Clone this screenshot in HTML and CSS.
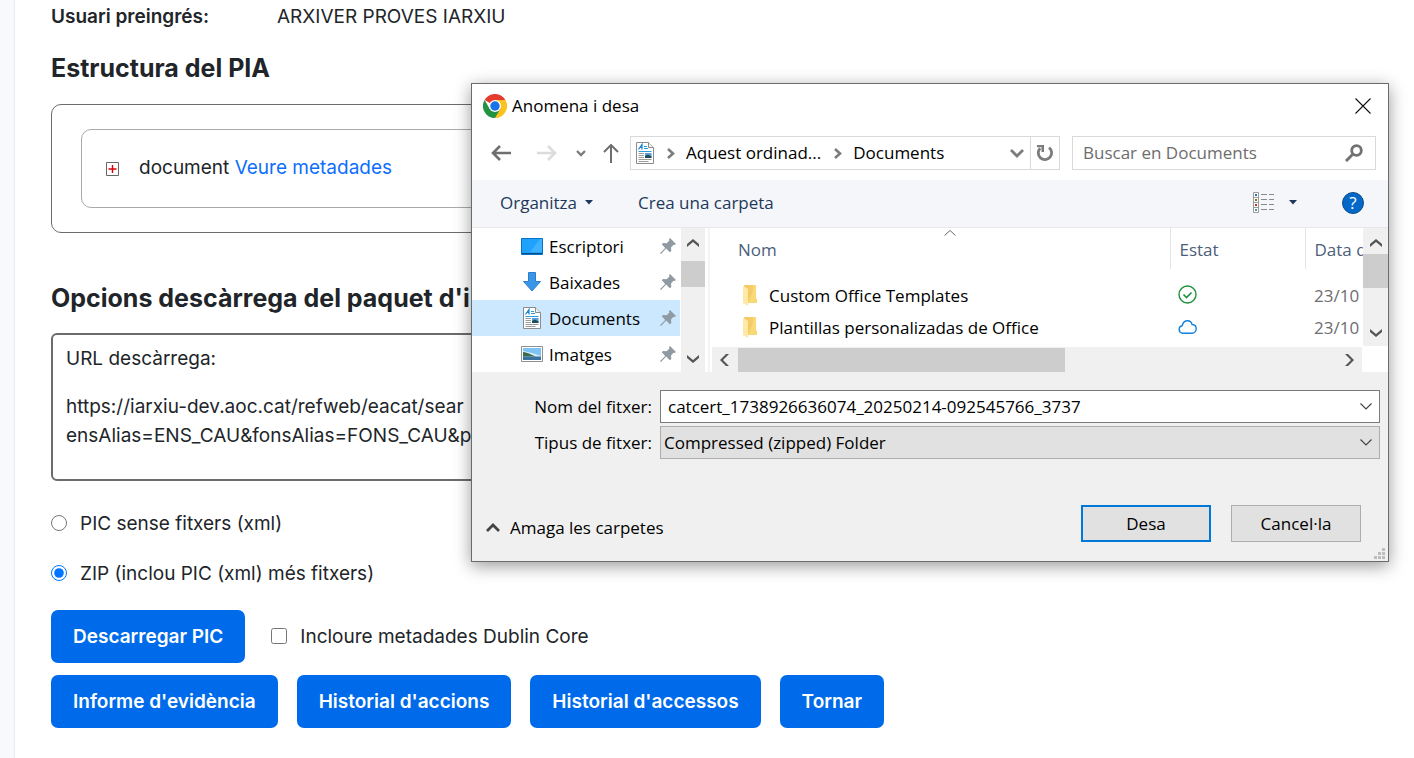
FILE: index.html
```html
<!DOCTYPE html>
<html lang="ca">
<head>
<meta charset="utf-8">
<title>iArxiu</title>
<meta name="viewport" content="width=device-width, initial-scale=1">
<link rel="stylesheet" href="styles.css">
</head>
<body>
<svg class="defs" aria-hidden="true">
  <symbol id="doc" viewBox="0 0 18 22">
    <path d="M.5.5h12l5 5v16H.5z" fill="#fff" stroke="#8b8b8b"/>
    <path d="M12.5.5v5h5" fill="#eee" stroke="#8b8b8b"/>
    <path d="M2.500 7.500L6 2.500v5M4 5.500h2" fill="none" stroke="#1583cf" stroke-width="1.200"/>
    <path d="M8 4.500h3M8 6.500h4M2.500 9.500h13" stroke="#2a9be0"/>
    <path d="M2.500 11.500H8M2.500 13.500H8M2.500 15.500H8M2.500 17.500h13M2.500 19.500h10" stroke="#9a9a9a"/>
    <path d="M9 11h6.500v5H9z" fill="#5a9fd8"/><path d="M9 14l3-1.500 3.500 2V16H9z" fill="#1d4d5a"/>
  </symbol>
  <symbol id="pin" viewBox="0 0 16 16">
    <path d="M10 0l6 6-1.500 1-1-.3-2.500 2.700.3 3.600-1.500 1.200-3.600-3.700L1 16l-1-.8 5.200-5.300L1.800 6.200 3 5l3.700.2L9.400 2.600 9 1z" fill="#8f9aa3"/>
  </symbol>
  <symbol id="folder" viewBox="0 0 14 22">
    <path d="M1 0h12v13l1 1v4H4z" fill="#f9d978"/><path d="M1 0h9v6L5 18z" fill="#f3cc69"/>
    <path d="M0 1l5 3v17l-5-3z" fill="#ffe9a6"/>
  </symbol>
  <symbol id="down" viewBox="0 0 12 8"><path d="M0 0l6 5 6-5v3L6 8 0 3z"/></symbol>
  <symbol id="up" viewBox="0 0 12 8"><path d="M0 8l6-5 6 5V5L6 0 0 5z"/></symbol>
  <symbol id="thin-down" viewBox="0 0 12 7"><path d="M.5.5L6 6l5.500-5.500" fill="none" stroke="#444" stroke-width="1.200"/></symbol>
  <symbol id="crumb" viewBox="0 0 8 11"><path d="M1 1l5 4.500L1 10" fill="none" stroke="#7c7c7c" stroke-width="2.600"/></symbol>
  <symbol id="caret" viewBox="0 0 8 5"><path d="M0 0h8L4 4.500z"/></symbol>
</svg>

<div class="page">
  <div class="rail"></div>
  <main class="main">
    <dl class="field"><dt>Usuari preingrés:</dt><dd>ARXIVER PROVES IARXIU</dd></dl>
    <h2 class="title">Estructura del PIA</h2>
    <div class="tree">
      <div class="node">
        <button class="expand" aria-label="Desplega">
          <svg width="13" height="14" viewBox="0 0 13 14"><path d="M.5.500h12v13H.5z" fill="#fff" stroke="#666"/><path d="M6.500 3v8M2.500 7h8" stroke="#d00" stroke-width="1.400"/></svg>
        </button>
        <span>document <a href="#metadades">Veure metadades</a></span>
      </div>
    </div>
    <h2 class="title title-options">Opcions descàrrega del paquet d'i</h2>
    <div class="url-box">
      <p>URL descàrrega:</p>
      <p>https://iarxiu-dev.aoc.cat/refweb/eacat/sear<br>ensAlias=ENS_CAU&amp;fonsAlias=FONS_CAU&amp;p</p>
    </div>
    <label class="choice"><input type="radio" name="format">PIC sense fitxers (xml)</label>
    <label class="choice"><input type="radio" name="format" checked>ZIP (inclou PIC (xml) més fitxers)</label>
    <div class="actions">
      <button class="btn">Descarregar PIC</button>
      <label class="choice choice-check"><input type="checkbox">Incloure metadades Dublin Core</label>
    </div>
    <div class="actions">
      <button class="btn">Informe d'evidència</button>
      <button class="btn">Historial d'accions</button>
      <button class="btn">Historial d'accessos</button>
      <button class="btn">Tornar</button>
    </div>
  </main>
</div>

<section class="dialog" role="dialog" aria-labelledby="dialog-title">
  <header class="titlebar">
    <svg width="24" height="24" viewBox="0 0 24 24">
      <path d="M12 12L1.600 6A12 12 0 0 1 22.400 6z" fill="#e33b2e"/>
      <path d="M12 12V6h10.400A12 12 0 0 1 12 24z" fill="#fcc31e"/>
      <path d="M12 12l5.200 3L12 24A12 12 0 0 1 1.600 6l5.200 9z" fill="#229342"/>
      <circle cx="12" cy="12" r="6" fill="#fff"/><circle cx="12" cy="12" r="4.700" fill="#1a73e8"/>
    </svg>
    <h1 id="dialog-title">Anomena i desa</h1>
    <button class="plain close" aria-label="Tanca"><svg width="16" height="16" viewBox="0 0 16 16"><path d="M.5.500l15 15M15.500.5l-15 15" stroke="#111" stroke-width="1.100"/></svg></button>
  </header>

  <div class="navbar">
    <div class="nav-buttons">
      <button class="plain" aria-label="Enrere"><svg width="20" height="16" viewBox="0 0 20 16"><path d="M9 1L2 8l7 7M2 8h18" fill="none" stroke="#6f6f6f" stroke-width="2.600"/></svg></button>
      <button class="plain forward" aria-label="Endavant"><svg width="20" height="16" viewBox="0 0 20 16"><path d="M11 1l7 7-7 7M18 8H0" fill="none" stroke="#dcdcdc" stroke-width="2.600"/></svg></button>
      <button class="plain recent" aria-label="Recents"><svg width="10" height="7" viewBox="0 0 10 7"><path d="M1 1l4 4 4-4" fill="none" stroke="#7c7c7c" stroke-width="2.400"/></svg></button>
      <button class="plain" aria-label="Amunt"><svg width="16" height="19" viewBox="0 0 16 19"><path d="M1 8l7-7 7 7M8 1v18" fill="none" stroke="#6f6f6f" stroke-width="2"/></svg></button>
    </div>
    <div class="address">
      <svg width="18" height="22"><use href="#doc"/></svg>
      <svg class="sep" width="8" height="11"><use href="#crumb"/></svg>
      <button class="plain crumb">Aquest ordinad...</button>
      <svg class="sep" width="8" height="11"><use href="#crumb"/></svg>
      <button class="plain crumb">Documents</button>
      <button class="plain history" aria-label="Ubicacions anteriors"><svg width="14" height="9" viewBox="0 0 14 9"><path d="M1 1l6 6 6-6" fill="none" stroke="#7c7c7c" stroke-width="2.800"/></svg></button>
      <button class="plain refresh" aria-label="Actualitza"><svg width="18" height="18" viewBox="0 0 18 18"><path d="M13 3.600A6.700 6.700 0 1 1 4.200 4.200" fill="none" stroke="#7c7c7c" stroke-width="2.800"/><path d="M1 1h7v7H5.500V3.200H1z" fill="#7c7c7c"/></svg></button>
    </div>
    <div class="search">
      <input type="search" placeholder="Buscar en Documents" aria-label="Buscar en Documents">
      <svg width="18" height="18" viewBox="0 0 18 18"><circle cx="11.500" cy="6.500" r="4.800" fill="none" stroke="#727272" stroke-width="2.800"/><path d="M8 10l-7 7" stroke="#727272" stroke-width="3"/></svg>
    </div>
  </div>

  <div class="toolbar">
    <button class="plain">Organitza <svg width="8" height="5"><use href="#caret"/></svg></button>
    <button class="plain">Crea una carpeta</button>
    <button class="plain view" aria-label="Canvia la visualització">
      <svg width="22" height="22" viewBox="0 0 22 22"><path d="M.5.500h5v20h-5zM.5 5.500h5M.5 10.500h5M.5 15.500h5" fill="#fff" stroke="#9a9a9a"/><path d="M8 2.500h6M16 2.500h5M8 7.500h6M16 7.500h5M8 12.500h6M16 12.500h5M8 17.500h6M16 17.500h5" stroke="#8a8a8a"/><path d="M2 2h2v2H2z" fill="#1f6fc0"/><path d="M2 7h2v2H2z" fill="#6b7a1a"/><path d="M2 12h2v2H2z" fill="#c3301c"/><path d="M2 17h2v2H2z" fill="#5f9a8a"/></svg>
      <svg width="8" height="5"><use href="#caret"/></svg>
    </button>
    <button class="help" aria-label="Ajuda">?</button>
  </div>

  <div class="browser">
    <ul class="places">
      <li><svg width="22" height="17" viewBox="0 0 22 17"><path d="M.5.500h21v16H.5z" fill="#1ea2fb" stroke="#0a72c4"/><path d="M1 15.500h20" stroke="#0a4d86"/><path d="M9 14L19 1h2v13z" fill="#3fb2ff"/></svg><span>Escriptori</span><svg class="pin" width="16" height="16"><use href="#pin"/></svg></li>
      <li><svg width="22" height="20" viewBox="0 0 22 20"><path d="M7.500.5h7v9h5L11 19 2.500 9.500h5z" fill="#3a97e8" stroke="#2b7fce"/></svg><span>Baixades</span><svg class="pin" width="16" height="16"><use href="#pin"/></svg></li>
      <li class="selected"><svg width="22" height="22"><use href="#doc"/></svg><span>Documents</span><svg class="pin" width="16" height="16"><use href="#pin"/></svg></li>
      <li><svg width="22" height="16" viewBox="0 0 22 16"><path d="M.5.500h21v15H.5z" fill="#fff" stroke="#8f8f8f"/><path d="M2 2h18v12H2z" fill="#7ec3f3"/><path d="M2 5l9 2 9 3v1H2z" fill="#d8eefb"/><path d="M2 6c5 0 9 4 14 4.500H2z" fill="#3c6b4c"/><path d="M2 10.500h18V14H2z" fill="#38749f"/></svg><span>Imatges</span><svg class="pin" width="16" height="16"><use href="#pin"/></svg></li>
    </ul>
    <div class="vbar"><svg width="12" height="8"><use href="#up"/></svg><i class="thumb thumb-places"></i><svg class="end" width="12" height="8"><use href="#down"/></svg></div>
    <div class="files">
      <div class="files-row">
        <div class="files-view">
          <table>
            <colgroup><col><col class="col-state"><col class="col-date"></colgroup>
            <thead><tr><th><svg class="sort" width="12" height="6" viewBox="0 0 12 6"><path d="M.5 5.500L6 .5l5.500 5" fill="none" stroke="#666"/></svg>Nom</th><th>Estat</th><th>Data d</th></tr></thead>
            <tbody>
              <tr><td><div class="name"><svg width="14" height="22"><use href="#folder"/></svg>Custom Office Templates</div></td>
              <td><svg width="19" height="19" viewBox="0 0 19 19"><circle cx="9.500" cy="9.500" r="8.500" fill="none" stroke="#1e8f3a" stroke-width="1.400"/><path d="M5.500 9.500l3 3 5-5" fill="none" stroke="#1e8f3a" stroke-width="1.600"/></svg></td><td>23/10</td></tr>
              <tr><td><div class="name"><svg width="14" height="22"><use href="#folder"/></svg>Plantillas personalizadas de Office</div></td>
              <td><svg width="19" height="14" viewBox="0 0 19 14"><path d="M4.500 13.200a3.800 3.800 0 0 1-.3-7.500C5 2.600 7 .8 9.500.8c2.400 0 4 1.400 4.600 3.700 2.500.1 4.100 1.900 4.100 4.300s-1.700 4.400-4.200 4.400z" fill="none" stroke="#1380dc" stroke-width="1.400"/></svg></td><td>23/10</td></tr>
            </tbody>
          </table>
        </div>
        <div class="vbar vbar-files"><svg width="12" height="8"><use href="#up"/></svg><i class="thumb"></i><svg class="end" width="12" height="8"><use href="#down"/></svg></div>
      </div>
      <div class="hbar"><svg width="9" height="12" viewBox="0 0 9 12"><path d="M9 0L3 6l6 6H6L0 6l6-6z"/></svg><i class="hthumb"></i><svg class="right" width="9" height="12" viewBox="0 0 9 12"><path d="M0 0l6 6-6 6h3l6-6-6-6z"/></svg></div>
    </div>
  </div>

  <div class="form">
    <label for="filename">Nom del fitxer:</label>
    <div class="combo"><input id="filename" type="text" value="catcert_1738926636074_20250214-092545766_3737"><button class="plain" aria-label="Noms recents"><svg width="12" height="7"><use href="#thin-down"/></svg></button></div>
    <label for="filetype">Tipus de fitxer:</label>
    <div class="combo combo-type"><select id="filetype"><option>Compressed (zipped) Folder</option></select><svg width="12" height="7"><use href="#thin-down"/></svg></div>
  </div>
  <footer class="footer">
    <button class="plain hide"><svg width="14" height="9" viewBox="0 0 14 9"><path d="M1 8l6-6 6 6" fill="none" stroke="#444" stroke-width="2.800"/></svg>Amaga les carpetes</button>
    <button class="win win-default">Desa</button>
    <button class="win">Cancel·la</button>
  </footer>
  <svg class="grip" width="11" height="11" viewBox="0 0 11 11"><path d="M8 0h3v3H8zM4 4h3v3H4zM8 4h3v3H8zM0 8h3v3H0zM4 8h3v3H4zM8 8h3v3H8z" fill="#bdbdbd"/></svg>
</section>
</body>
</html>
```
FILE: styles.css
```css
* { box-sizing: border-box; }
body { margin: 0; background: #fff; color: #212529; font: 19px/28px Inter, sans-serif; }
button, input, select { font: inherit; color: inherit; }
.defs { position: absolute; width: 0; height: 0; }

.page { display: flex; min-height: 100vh; }
.rail { flex: none; width: 15px; background: #f8f9fd; border-right: 1px solid #e9ebee; }
.main { flex: 1; min-width: 0; padding: 3px 52px 16px 36px; }
.field { display: flex; margin: 0; }
.field dt { width: 226px; font-weight: 600; }
.field dd { margin: 0; }
.title { margin: 21px 0 20px; font-size: 25px; line-height: 32px; font-weight: 700; white-space: nowrap; }
.tree { padding: 24px 29px; border: 1px solid #6c6c6c; border-radius: 10px; }
.node { display: flex; align-items: center; gap: 20px; height: 79px; padding: 0 24px 2px; border: 1px solid #aaa; border-radius: 10px; }
.node a { color: #0d6efd; text-decoration: none; }
.expand { display: flex; padding: 2px 0 0; border: 0; background: none; }
.title-options { margin: 49px 0 19px; }
.url-box { height: 148px; margin-bottom: 29px; padding: 9px 13px; border: 2px solid #6c6c6c; border-radius: 6px; }
.url-box p { margin: 0 0 19px; line-height: 29px; white-space: nowrap; }
.choice { display: flex; align-items: center; gap: 13px; margin-bottom: 22px; }
.choice input { width: 16px; height: 16px; margin: 0 0 2px; }
.choice-check { margin: 0 0 0 7px; }
.actions { display: flex; align-items: center; gap: 19px; margin-bottom: 12px; }
.btn { height: 53px; padding: 0 22px; border: 0; border-radius: 7px; background: #006bea; color: #fff; font-weight: 600; }

.dialog { position: absolute; left: 471px; right: 25px; top: 83px; border: 1px solid #6b6b6b; background: #f0f0f0; color: #000; font: 17px/24px "Open Sans", sans-serif; font-variant-ligatures: none; font-feature-settings: "locl" 0; box-shadow: 0 4px 16px rgba(0,0,0,.4); }
.plain { display: flex; align-items: center; padding: 0; border: 0; background: none; white-space: nowrap; }
.titlebar { display: flex; align-items: center; gap: 5px; height: 43px; padding: 0 17px 0 11px; background: #fff; }
.titlebar h1 { margin: 0; font: inherit; }
.close { margin-left: auto; }
.navbar { display: flex; align-items: center; gap: 12px; height: 53px; padding: 0 12px 1px 19px; background: #fff; }
.nav-buttons { display: flex; flex: none; align-items: center; width: 127px; }
.forward { margin-left: 26px; }
.recent { margin: 0 17px 0 19px; }
.address { display: flex; flex: 1; align-items: center; height: 34px; padding-left: 5px; border: 1px solid #d9d9d9; }
.sep { margin: 0 11px 0 13px; }
.history { margin-left: auto; margin-right: 6px; }
.refresh { justify-content: center; width: 29px; height: 32px; border-left: 1px solid #d9d9d9; }
.search { display: flex; align-items: center; width: 304px; height: 34px; padding: 0 12px 0 10px; border: 1px solid #d9d9d9; }
.search input { flex: 1; min-width: 0; padding: 0; border: 0; outline: 0; background: none; appearance: none; }
.search input::placeholder { color: #6d6d6d; }
.toolbar { display: flex; align-items: center; gap: 45px; height: 48px; padding: 0 24px 2px 28px; border-bottom: 1px solid #e8e8e8; background: #f4f6f9; color: #1e395b; }
.toolbar svg { fill: #1e395b; }
.toolbar .plain { gap: 8px; }
.toolbar .view { gap: 14px; margin-left: auto; }
.help { width: 22px; height: 22px; padding: 0; border: 1px solid #0a4c8c; border-radius: 50%; background: #0468c8; color: #fff; line-height: 18px; }

.browser { display: flex; height: 144px; background: #fff; }
.places { width: 208px; margin: 0 1px 0 0; padding: 0; list-style: none; }
.places li { display: flex; align-items: center; gap: 6px; height: 36px; padding: 0 4px 0 49px; }
.places span { padding-top: 1px; }
.places .selected { background: #cce8ff; }
.pin { margin-left: auto; }
.vbar { display: flex; flex-direction: column; align-items: center; width: 24px; padding: 11px 0 9px; background: #f0f0f0; fill: #555; }
.vbar svg, .hbar svg { flex: none; }
.vbar .end { margin-top: auto; }
.thumb { width: 100%; height: 34px; margin-top: 7px; background: #cdcdcd; }
.thumb-places { height: 26px; margin-top: 14px; }
.files { flex: 1; min-width: 0; margin-left: 3px; border-left: 2px solid #f3f3f3; }
.files-row { display: flex; height: 119px; }
.files-view { flex: 1; min-width: 0; overflow: hidden; }
.vbar-files { width: 25px; height: 118px; }
table { width: 100%; table-layout: fixed; border-collapse: collapse; }
.col-state { width: 135px; }
.col-date { width: 58px; }
th, td { overflow: hidden; padding: 0 0 0 9px; text-align: left; font-weight: 400; white-space: nowrap; }
th { height: 41px; padding-top: 2px; border-right: 1px solid #e5e5e5; color: #4c607a; }
th:first-child { position: relative; padding-left: 28px; }
th:last-child { border-right: 0; }
.sort { position: absolute; left: 50%; top: 2px; margin-left: 4px; }
tbody::before { content: ""; display: block; height: 11px; }
td { height: 32px; color: #6d6d6d; }
td:first-child { padding-left: 33px; color: #000; }
td:nth-child(2) { padding: 0 0 3px 8px; }
td svg { display: block; }
.name { display: flex; align-items: center; gap: 12px; }
.hbar { display: flex; align-items: center; height: 25px; margin: 0 26px 0 2px; padding: 0 8px; background: #f0f0f0; fill: #555; }
.hthumb { width: 327px; height: 24px; margin-left: 9px; background: #cdcdcd; }
.hbar .right { margin-left: auto; }

.form { display: grid; grid-template-columns: 180px 1fr; gap: 3px 8px; align-items: center; padding: 18px 8px 0 0; }
.form label { padding-top: 1px; text-align: right; }
.combo { position: relative; display: flex; align-items: center; height: 33px; border: 1px solid #7a7a7a; background: #fff; }
.combo input, .combo select { flex: 1; min-width: 0; height: 31px; padding: 0 7px; border: 0; outline: 0; background: none; appearance: none; }
.combo .plain { padding: 0 7px; }
.combo-type { border-color: #adadad; background: #e1e1e1; }
.combo-type select { padding: 1px 3px 0; }
.combo-type svg { position: absolute; right: 7px; pointer-events: none; }
.footer { display: flex; align-items: center; gap: 20px; padding: 46px 27px 19px 14px; }
.hide { gap: 10px; margin: 8px auto 0 0; }
.win { width: 130px; height: 37px; padding: 1px 0 0; border: 1px solid #adadad; background: #e1e1e1; }
.win-default { border: 2px solid #0078d7; }
.grip { position: absolute; right: 3px; bottom: 2px; }
```
